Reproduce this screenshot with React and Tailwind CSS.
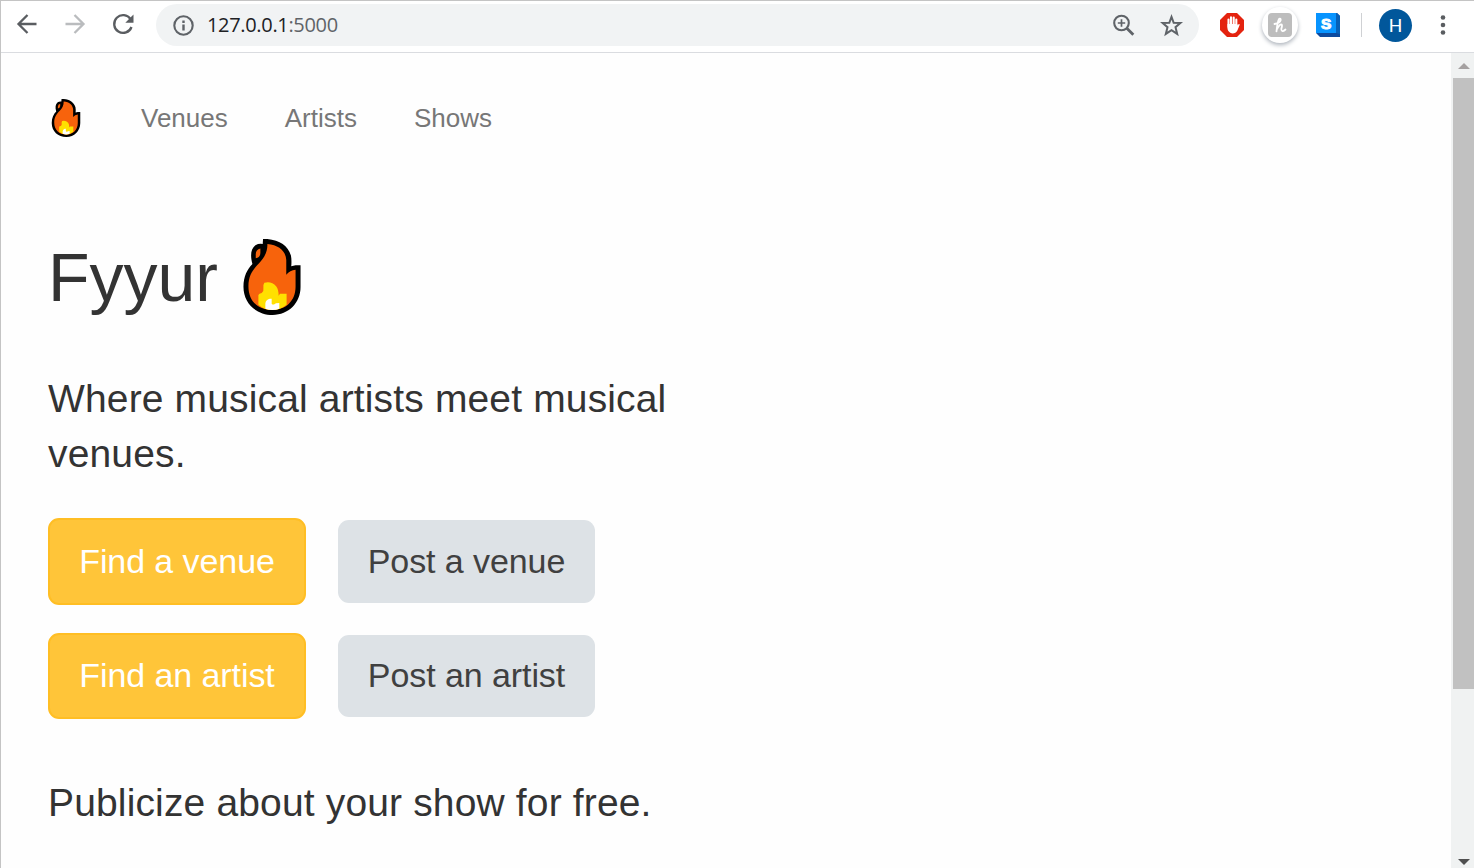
import React from 'react';

function Flame({ className }) {
  return (
    <svg viewBox="54 42 172 229" className={className}>
      <path
        d="M113 42 H126 C164 46 188 62 197 92 C199 102 199 113 198 124 L211 121 H226 V187 C226 235 190 271 142 271 C92 271 54 236 54 186 C54 154 66 132 81 117 C74 92 76 72 90 61 Q100 55 112 57 Z"
        fill="#000"
      />
      <path
        d="M126 57 C161 60 181 78 183 105 V150 Q194 137 211 135 V186 C211 229 181 256 141 256 C98 256 69 229 69 184 C69 151 84 132 101 115 C117 98 127 80 126 57 Z"
        fill="#f7630c"
      />
      <path d="M105 71 Q91 75 91 88 L91 100 Q104 98 105 84 Z" fill="#f7630c" />
      <path
        d="M117 174 Q138 168 153 185 Q160 194 160 213 L164 207 H184 V240 Q165 256 141 256 Q116 256 99 240 V211 Q101 206 109 205 Q116 199 114 191 Q112 181 117 174 Z"
        fill="#ffe000"
      />
      <path
        d="M133 222 H139 V237 Q142 241 146 239 Q150 235 162 235 V252 Q141 260 120 252 V236 Q121 226 133 222 Z"
        fill="#fff"
      />
    </svg>
  );
}

function Toolbar() {
  return (
    <header className="flex h-[53px] shrink-0 items-start border-b border-[#dadce0] border-t border-t-[#c4c4c4] bg-white pl-[14px] pt-[3px]">
      <div className="flex h-[42px] items-center gap-6">
        <svg viewBox="0 0 24 24" className="mb-[2px] h-6 w-6" fill="none" stroke="#5a5d61" strokeWidth="2.300">
          <path d="M21.500 12H3.500M12.500 3l-9 9 9 9" />
        </svg>
        <svg viewBox="0 0 24 24" className="mb-[2px] h-6 w-6" fill="none" stroke="#babcbe" strokeWidth="2.300">
          <path d="M2.500 12h18M11.500 3l9 9-9 9" />
        </svg>
        <svg viewBox="0 0 24 24" className="mb-[2px] h-6 w-6" fill="none" stroke="#5a5d61" strokeWidth="2.300">
          <path d="M19.600 7.200A8.900 8.900 0 1 0 20.500 15" />
          <path d="M22.500 2.500v8.200h-8.200z" fill="#5a5d61" stroke="none" />
        </svg>
      </div>
      <div className="ml-[21px] flex h-[42px] w-[1043px] items-center rounded-full bg-[#f1f3f4] pl-4 pr-[15px]">
        <svg viewBox="0 0 24 24" className="h-6 w-6" fill="none" stroke="#5f6368" strokeWidth="2.100">
          <circle cx="11.500" cy="12.500" r="9.200" />
          <path d="M11.500 11.500v6M11.500 7.400v2.500" strokeWidth="2.400" />
        </svg>
        <span className="ml-[11px] font-['Open_Sans',sans-serif] text-[20px] leading-[28px] tracking-[-0.33px] text-[#5f6368]">
          <span className="text-[#202124]">127.0.0.1</span>:5000
        </span>
        <svg viewBox="0 0 24 24" className="ml-auto h-6 w-6" fill="none" stroke="#5f6368" strokeWidth="2.100">
          <circle cx="9.500" cy="10" r="7.300" />
          <path d="M14.800 15.300l6.500 6.500" strokeWidth="2.800" />
          <path d="M9.500 6.300v7.400M5.800 10h7.400" strokeWidth="1.700" />
        </svg>
        <svg viewBox="0 0 24 24" className="ml-6 h-6 w-6" fill="none" stroke="#5f6368" strokeWidth="2">
          <path d="M11.500 3.800l2.200 6 6.700.2-4.900 4.200 1.700 6.700-5.700-3.700-5.700 3.700 1.700-6.700L2.600 10l6.700-.2z" />
        </svg>
      </div>
      <div className="flex h-[42px] items-center">
        <svg viewBox="0 0 24 24" className="ml-[21px] h-6 w-6">
          <path d="M7 0h10l7 7v10l-7 7H7l-7-7V7z" fill="#e4230f" />
          <path
            d="M8.500 14V6.500M11 12V4.200M13.700 12V4.500M16.300 13V6.500"
            stroke="#fff"
            strokeWidth="2.100"
            strokeLinecap="round"
          />
          <path
            d="M7.500 11h9.900v1.500l.8-1q1.400-.9 1.500.2l-2.200 5.500Q15.800 20.400 12.500 20.400 8.500 20 7.500 16z"
            fill="#fff"
          />
        </svg>
        <span className="ml-[18px] flex h-9 w-9 items-center justify-center rounded-full bg-white shadow-[0_2px_4px_0_#aeb4bc]">
          <svg viewBox="0 0 24 24" className="h-6 w-6">
            <rect width="24" height="24" rx="4" fill="#bdbdbd" />
            <path
              d="M6.500 11Q12 10 12.700 7 12.700 5 11.200 5.800 9.500 8 8.500 18.300M9 16Q12 10.500 13.700 11.500 14.500 12.500 13.300 16 13.500 20 17.500 16.500"
              fill="none"
              stroke="#fff"
              strokeWidth="1.800"
              strokeLinecap="round"
              strokeLinejoin="round"
            />
          </svg>
        </span>
        <svg viewBox="0 0 24 24" className="ml-[18px] h-6 w-6 overflow-visible">
          <path d="M0 0h21l3 3v21H4l-4-4z" fill="#0d4a9e" />
          <path d="M20 0h1l3 3v18l-4-1z" fill="#0760b8" />
          <path d="M0 0h20v20H0z" fill="#0794ff" />
          <text
            x="10.200"
            y="15.700"
            textAnchor="middle"
            fill="#fff"
            stroke="#fff"
            strokeWidth="1"
            className="font-['Liberation_Sans',Arial,sans-serif] text-[15.500px] font-bold"
          >
            S
          </text>
        </svg>
        <span className="ml-[21px] h-6 w-px bg-[#cfd1d4]" />
        <span className="ml-[17px] flex h-[33px] w-[33px] items-center justify-center rounded-full bg-[#01579b] font-[Roboto,sans-serif] text-[19px] leading-none text-white">
          H
        </span>
        <svg viewBox="0 0 6 20" className="ml-[28px] h-5 w-[6px]" fill="#5a5d61">
          <circle cx="3" cy="2.500" r="2.300" />
          <circle cx="3" cy="10" r="2.300" />
          <circle cx="3" cy="17.500" r="2.300" />
        </svg>
      </div>
    </header>
  );
}

function Scrollbar() {
  return (
    <div className="flex w-[23px] shrink-0 flex-col items-end bg-[#f0f2f2]">
      <div className="flex h-[25px] w-[21px] items-center justify-center">
        <svg viewBox="0 0 12 6" className="h-[6px] w-[12px]">
          <path d="M0 6l6-6 6 6z" fill="#a5a1a1" />
        </svg>
      </div>
      <div className="h-[611px] w-[21px] bg-[#c1c1c1]" />
      <div className="mt-auto flex w-[21px] justify-center pb-[3px]">
        <svg viewBox="0 0 12 6" className="h-[6px] w-[12px]">
          <path d="M0 0h12l-6 6z" fill="#4f4f4f" />
        </svg>
      </div>
    </div>
  );
}

function PrimaryButton({ children, className }) {
  return (
    <button
      className={`w-[258px] rounded-[11px] border-2 border-[#ffbe24] bg-[#ffc539] text-[34px] tracking-[-0.08px] text-white ${className}`}
    >
      {children}
    </button>
  );
}

function SecondaryButton({ children, className }) {
  return (
    <button
      className={`w-[257px] rounded-[11px] bg-[#dde2e6] text-[34px] tracking-[-0.08px] text-[#404040] ${className}`}
    >
      {children}
    </button>
  );
}

export default function App() {
  return (
    <div className="flex h-[868px] w-[1474px] flex-col overflow-hidden border-l border-[#c4c4c4] bg-[#fefefe] font-['Liberation_Sans',Arial,sans-serif] text-[#333]">
      <Toolbar />
      <div className="flex min-h-0 flex-1">
        <main className="min-w-0 flex-1 pl-[47px]">
          <nav className="flex h-[130px] items-center text-[26px] leading-[40px] text-[#777]">
            <Flame className="ml-[3px] h-[38px] w-[30px]" />
            <a className="ml-[60px]">Venues</a>
            <a className="ml-[57px]">Artists</a>
            <a className="ml-[57px]">Shows</a>
          </nav>
          <h1 className="flex h-[188px] items-center text-[68px] leading-[76px]">
            <span>Fyyur</span>
            <Flame className="ml-[25px] h-[76px] w-[58px]" />
          </h1>
          <p className="w-[660px] text-[39px] leading-[55px] tracking-[0.15px]">
            Where musical artists meet musical venues.
          </p>
          <div className="mt-[37px] flex items-center gap-8">
            <PrimaryButton className="h-[87px]">Find a venue</PrimaryButton>
            <SecondaryButton className="h-[83px]">Post a venue</SecondaryButton>
          </div>
          <div className="mt-[28px] flex items-center gap-8">
            <PrimaryButton className="h-[86px] pb-[2px]">Find an artist</PrimaryButton>
            <SecondaryButton className="h-[82px] pb-[2px]">Post an artist</SecondaryButton>
          </div>
          <p className="mt-[56px] text-[39px] leading-[55px] tracking-[0.15px]">
            Publicize about your show for free.
          </p>
        </main>
        <Scrollbar />
      </div>
    </div>
  );
}
